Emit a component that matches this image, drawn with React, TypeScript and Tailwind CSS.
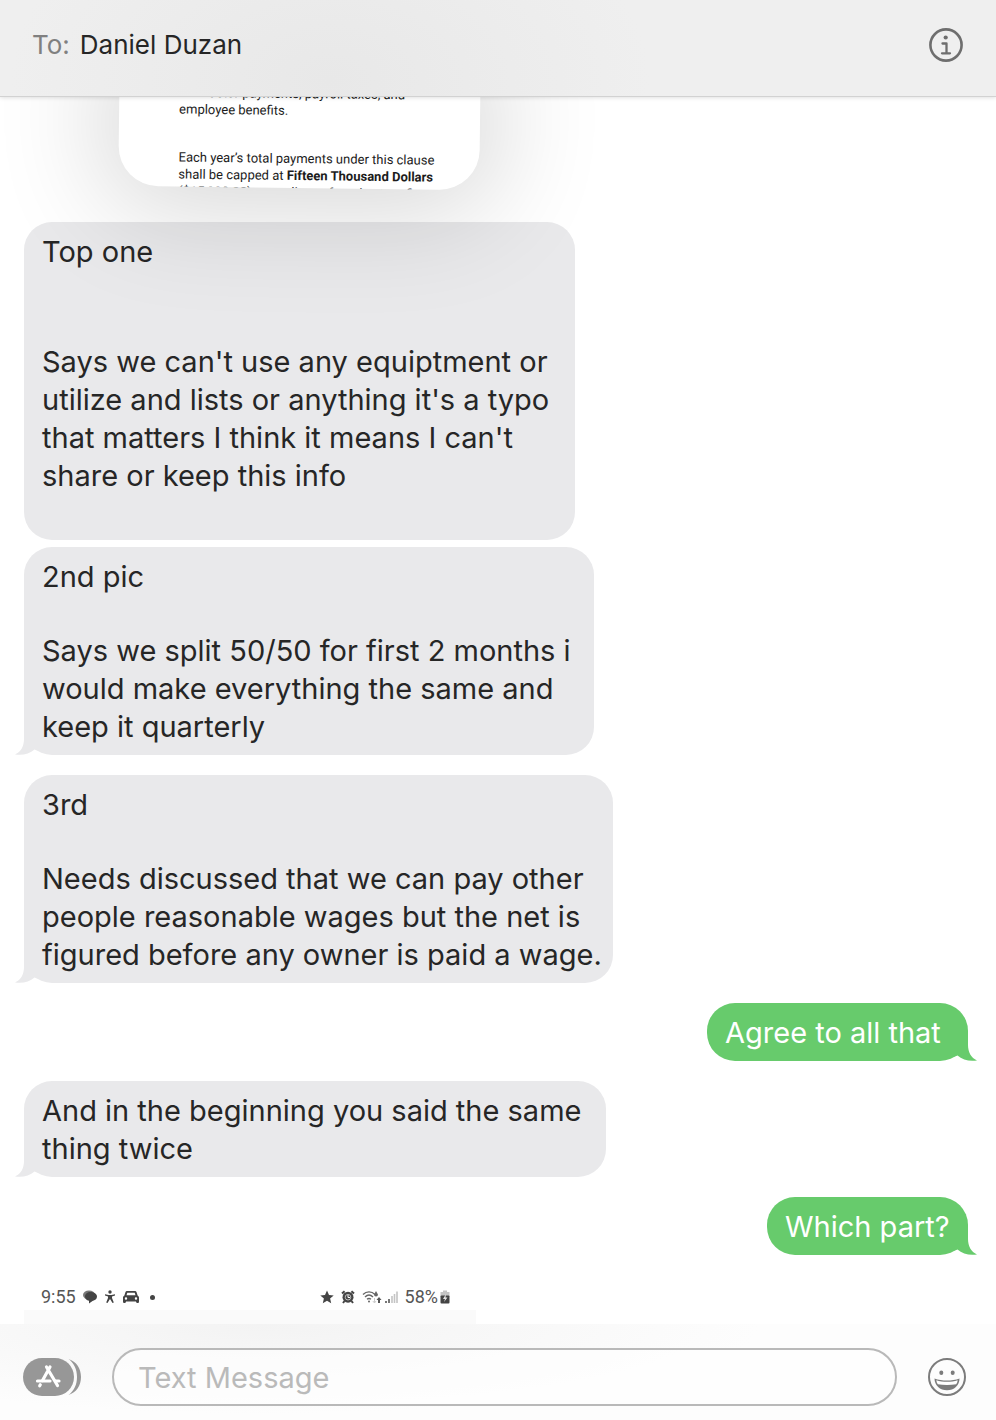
import React from "react";

type Side = "in" | "out";

type Message = {
  id: string;
  side: Side;
  // An empty string is a blank line
  lines: string[];
  width: string;
  spacing: string;
  tail: boolean;
};

const MESSAGES: Message[] = [
  {
    id: "top",
    side: "in",
    lines: [
      "Top one",
      "",
      "",
      "Says we can't use any equiptment or",
      "utilize and lists or anything it's a typo",
      "that matters I think it means I can't",
      "share or keep this info",
      "",
    ],
    width: "w-[551px]",
    spacing: "mt-[34px]",
    tail: false,
  },
  {
    id: "second",
    side: "in",
    lines: [
      "2nd pic",
      "",
      "Says we split 50/50 for first 2 months i",
      "would make everything the same and",
      "keep it quarterly",
    ],
    width: "w-[570px]",
    spacing: "mt-[7px]",
    tail: true,
  },
  {
    id: "third",
    side: "in",
    lines: [
      "3rd",
      "",
      "Needs discussed that we can pay other",
      "people reasonable wages but the net is",
      "figured before any owner is paid a wage.",
    ],
    width: "w-[589px]",
    spacing: "mt-5",
    tail: true,
  },
  {
    id: "agree",
    side: "out",
    lines: ["Agree to all that"],
    width: "w-[261px]",
    spacing: "mt-5",
    tail: true,
  },
  {
    id: "twice",
    side: "in",
    lines: ["And in the beginning you said the same", "thing twice"],
    width: "w-[582px]",
    spacing: "mt-5",
    tail: true,
  },
  {
    id: "which",
    side: "out",
    lines: ["Which part?"],
    width: "w-[201px]",
    spacing: "mt-5",
    tail: true,
  },
];

function Tail({ side }: { side: Side }) {
  return (
    <svg
      viewBox="0 0 24 28"
      aria-hidden="true"
      className={
        side === "in"
          ? "absolute bottom-0 -left-[9px] h-7 w-6 text-[#e9e9eb]"
          : "absolute -right-[9px] bottom-0 h-7 w-6 -scale-x-100 text-[#67cb6c]"
      }
    >
      <path
        d="M9 0V12C9 19 6 25 0 27.400C7 28.800 14.500 27 19.500 22.500L24 24V0Z"
        fill="currentColor"
      />
    </svg>
  );
}

function Bubble({ message }: { message: Message }) {
  const { side, lines, width, spacing, tail } = message;
  const tone =
    side === "in"
      ? "self-start bg-[#e9e9eb] text-[#262626]"
      : "self-end bg-[#67cb6c] text-white";
  return (
    <div
      className={`relative max-w-full rounded-[28px] px-[18px] pt-[11px] pb-[9px] text-[29px] leading-[38px] ${tone} ${width} ${spacing}`}
    >
      {lines.map((line, i) =>
        line ? (
          <p key={i} className="whitespace-nowrap">
            {line}
          </p>
        ) : (
          <div key={i} className="h-9" />
        )
      )}
      {tail && <Tail side={side} />}
    </div>
  );
}

function DocumentCard() {
  return (
    <div className="relative z-10 -mt-10 ml-[95px] h-[131px] w-[361px] rotate-[0.7deg] overflow-hidden rounded-b-[40px] bg-white pt-7 pl-[60px] font-[Roboto,sans-serif] text-[13px] leading-[17px] whitespace-nowrap text-[#1c1c1c] shadow-[0_6px_110px_16px_rgba(0,0,0,0.16)]">
      <p>contractor payments, payroll taxes, and</p>
      <p>employee benefits.</p>
      <p className="mt-[31px]">Each year’s total payments under this clause</p>
      <p>
        shall be capped at <strong>Fifteen Thousand Dollars</strong>
      </p>
      <p>($15,000.00), regardless of total net profit.</p>
    </div>
  );
}

function PhoneStatusBar() {
  return (
    <div className="mt-5 w-[452px] max-w-full font-[Roboto,sans-serif] text-[18px] leading-5 text-[#555]">
      <div className="flex h-[35px] items-center justify-between pt-[9px] pr-[26px] pl-[17px]">
        <div className="flex items-center gap-[7px]">
          <span>9:55</span>
          <svg viewBox="0 0 14 14" className="h-[14px] w-[14px]" aria-hidden="true">
            <ellipse cx="6" cy="5" rx="6" ry="4.500" fill="#777" />
            <path
              d="M7.500 2C11 2 14 3.800 14 6.600C14 9 12 10.500 9.500 10.900L6 13.500V10.800C3.500 10.300 2 8.800 2 6.600C2 3.800 4.500 2 7.500 2Z"
              fill="#444"
            />
          </svg>
          <svg viewBox="0 0 12 14" className="h-[14px] w-3" aria-hidden="true">
            <circle cx="6" cy="2" r="1.700" fill="#444" />
            <path
              d="M1 4.200L4.500 5H7.500L11 4.200V5.600L8 6.500V8L9.800 12.500L8.500 13L6.200 9.300H5.800L3.500 13L2.200 12.500L4 8V6.500L1 5.600Z"
              fill="#444"
            />
          </svg>
          <svg viewBox="0 0 16 14" className="h-[14px] w-4" aria-hidden="true">
            <path
              fillRule="evenodd"
              d="M4 1H12C12.800 1 13.300 1.400 13.600 2.200L14.600 5.500C15.500 6 16 6.800 16 7.800V11.500C16 12.500 15.500 13 14.500 13C13.500 13 13 12.400 13 11.500H3C3 12.400 2.500 13 1.500 13C0.500 13 0 12.500 0 11.500V7.800C0 6.800 0.500 6 1.400 5.500L2.400 2.200C2.700 1.400 3.200 1 4 1ZM4.300 2.700L3.500 5.200H12.500L11.700 2.700ZM3 7.300A1.200 1.200 0 1 0 3 9.700A1.200 1.200 0 1 0 3 7.300ZM13 7.300A1.200 1.200 0 1 0 13 9.700A1.200 1.200 0 1 0 13 7.300Z"
              fill="#444"
            />
          </svg>
          <span className="ml-1 h-[5px] w-[5px] rounded-full bg-[#444]" />
        </div>
        <div className="flex items-center gap-[7px]">
          <svg viewBox="0 0 14 14" className="h-[14px] w-[14px]" aria-hidden="true">
            <path
              d="M7 0.500L9 5L13.700 5.400L10.100 8.500L11.200 13.200L7 10.700L2.800 13.200L3.900 8.500L0.300 5.400L5 5Z"
              fill="#444"
            />
          </svg>
          <svg viewBox="0 0 14 14" className="h-[14px] w-[14px]" aria-hidden="true">
            <path
              d="M1 3.600L3.600 1.200M13 3.600L10.400 1.200M3.500 11L2 13M10.500 11L12 13"
              stroke="#444"
              strokeWidth="2"
            />
            <circle cx="7" cy="7.200" r="5.500" fill="#444" />
            <circle cx="7" cy="7.200" r="2.800" fill="none" stroke="#bbb" />
            <path d="M7 5V7.500H9" fill="none" stroke="#fff" />
          </svg>
          <svg viewBox="0 0 20 14" className="h-[14px] w-5" aria-hidden="true">
            <g fill="none" stroke="#666" strokeWidth="1.400">
              <path d="M1 4.500C4.500 1 9.500 1 13 4.500" />
              <path d="M3 7C5.500 4.600 8.500 4.600 11 7" />
              <path d="M5 9.300C6.300 8.200 7.700 8.200 9 9.300" />
            </g>
            <circle cx="7" cy="11.500" r="1" fill="#666" />
            <path d="M14 1L16 4.500A2 2 0 1 1 12 4.500Z" fill="#666" />
            <path d="M12.500 8V13M10.800 11L12.500 13L14 11" fill="none" stroke="#ccc" />
            <path d="M17 13V9" stroke="#555" strokeWidth="2" />
            <path d="M14.500 10L17 7L19.500 10Z" fill="#555" />
          </svg>
          <svg viewBox="0 0 13 14" className="-ml-1 h-[14px] w-[13px]" aria-hidden="true">
            <path d="M1 13V11M4 13V9" stroke="#555" strokeWidth="1.600" />
            <path d="M7 13V6M9.500 13V4M12 13V1.500" stroke="#c4c4c4" strokeWidth="1.600" />
          </svg>
          <span className="flex items-center gap-[2px]">
            58%
            <svg viewBox="0 0 10 14" className="h-[14px] w-[10px]" aria-hidden="true">
              <path d="M3 0.500H7V2H9.500V7H0.500V2H3Z" fill="#c4c4c4" />
              <rect x="0.500" y="5.500" width="9" height="8" rx="1" fill="#444" />
              <path d="M6 4L3 9H5L4 12L7.500 7.500H5.500Z" fill="#e5e5e5" />
            </svg>
          </span>
        </div>
      </div>
      <div className="h-[14px] bg-[#fafafa]" />
    </div>
  );
}

function InfoIcon() {
  return (
    <svg viewBox="0 0 34 34" className="h-[34px] w-[34px]" fill="none" aria-hidden="true">
      <circle cx="17" cy="17" r="15.600" stroke="#6e6e6e" strokeWidth="2.600" />
      <circle cx="16.700" cy="9.500" r="2.100" fill="#6e6e6e" />
      <path
        d="M13.500 15.500H17.500V25M13 25.300H21"
        stroke="#6e6e6e"
        strokeWidth="2.300"
        strokeLinecap="round"
        strokeLinejoin="round"
      />
    </svg>
  );
}

function AppsIcon() {
  return (
    <svg viewBox="0 0 58 38" className="h-[38px] w-[58px]" fill="none" aria-hidden="true">
      <path
        d="M45.500 1C53.500 3.500 58 10.500 58 19C58 27.500 53.500 34.500 45.500 37C51 33 54 26.500 54 19C54 11.500 51 5 45.500 1Z"
        fill="#979797"
      />
      <rect width="51" height="38" rx="19" fill="#979797" />
      <g stroke="#fff" strokeWidth="3.200" strokeLinecap="round">
        <path d="M27 9L19.500 22.500M23.500 9L34.500 27.500" />
        <path d="M14.500 23H27M32.500 23H36" />
        <path d="M17.300 26.800L16.700 27.800" />
      </g>
    </svg>
  );
}

function SmileyIcon() {
  return (
    <svg viewBox="0 0 38 38" className="h-[38px] w-[38px]" fill="none" aria-hidden="true">
      <circle cx="19" cy="19" r="18" stroke="#7c7c7c" strokeWidth="2" />
      <ellipse cx="13.300" cy="14.800" rx="2" ry="2.300" fill="#7c7c7c" />
      <ellipse cx="24.700" cy="14.800" rx="2" ry="2.300" fill="#7c7c7c" />
      <path
        d="M6.500 20.500C14 23.300 24 23.300 31.500 20.500C31.500 27.500 26 32.300 19 32.300C12 32.300 6.500 27.500 6.500 20.500Z"
        fill="#7c7c7c"
      />
      <path
        d="M8.300 22.300C15 24.300 23 24.300 29.700 22.300C29.500 24 29 25.300 28.200 26.300C22.500 27.300 15.500 27.300 9.800 26.300C9 25.300 8.500 24 8.300 22.300Z"
        fill="#fff"
      />
    </svg>
  );
}

export default function App() {
  return (
    <div className="flex min-h-screen flex-col overflow-hidden bg-white font-[Inter,sans-serif]">
      <header className="relative z-20 flex h-[97px] items-center justify-between border-b border-[#d2d2d2] bg-[#efefef] bg-[radial-gradient(ellipse_320px_200px_at_330px_80px,#e8e8e8,#efefef)] pr-[33px] pb-[7px] pl-8 text-[26px] leading-8 shadow-[0_1px_4px_rgba(0,0,0,0.12)]">
        <div className="flex gap-[10px]">
          <span className="text-[#808080]">To:</span>
          <h1 className="text-[#262626]">Daniel Duzan</h1>
        </div>
        <button type="button" aria-label="Conversation details">
          <InfoIcon />
        </button>
      </header>

      <main className="flex flex-1 flex-col px-6">
        <DocumentCard />
        <div className="flex flex-col pr-1">
          {MESSAGES.map((message) => (
            <Bubble key={message.id} message={message} />
          ))}
        </div>
        <PhoneStatusBar />
      </main>

      <footer className="flex h-24 items-center gap-[31px] bg-[#fdfdfd] bg-[radial-gradient(ellipse_500px_90px_at_260px_0px,#f3f3f3,#fdfdfd)] pt-[10px] pr-[30px] pl-[23px]">
        <button type="button" aria-label="Apps">
          <AppsIcon />
        </button>
        <input
          type="text"
          aria-label="Text Message"
          placeholder="Text Message"
          className="h-[58px] min-w-0 flex-1 rounded-full border-2 border-[#b9b9b9] bg-white/60 px-6 text-[29px] text-[#262626] outline-none placeholder:text-[#bababa]"
        />
        <button type="button" aria-label="Emoji">
          <SmileyIcon />
        </button>
      </footer>
    </div>
  );
}
